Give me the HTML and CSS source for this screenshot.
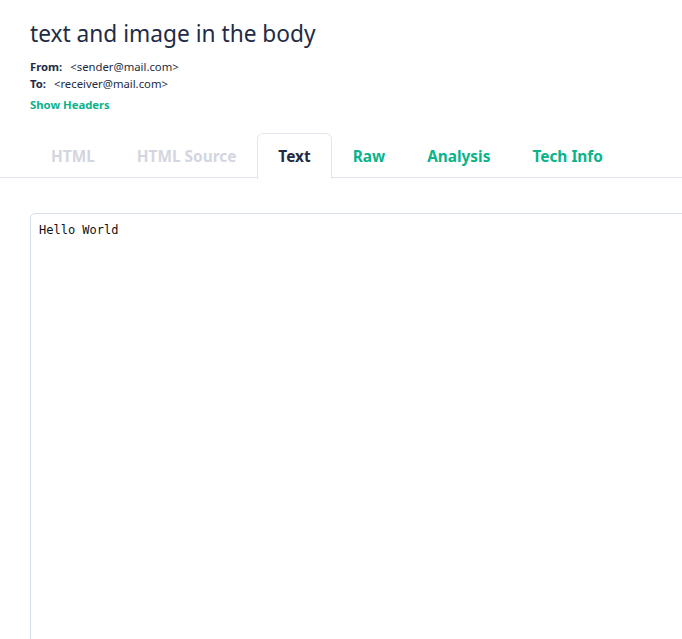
FILE: index.html
```html
<!DOCTYPE html>
<html>
<head>
<meta charset="utf-8">
<link rel="stylesheet" href="styles.css">
</head>
<body>
<div class="page">
  <header class="msg-head">
    <h1 class="subject">text and image in the body</h1>
    <div class="addr"><span class="lbl">From:</span><span class="val">&lt;sender@mail.com&gt;</span></div>
    <div class="addr"><span class="lbl">To:</span><span class="val">&lt;receiver@mail.com&gt;</span></div>
    <a class="show-headers">Show Headers</a>
  </header>
  <nav class="tabs">
    <span class="tab disabled">HTML</span>
    <span class="tab disabled">HTML Source</span>
    <span class="tab active">Text</span>
    <span class="tab link">Raw</span>
    <span class="tab link">Analysis</span>
    <span class="tab link">Tech Info</span>
  </nav>
  <section class="content">
    <pre class="textbox">Hello World</pre>
  </section>
</div>
</body>
</html>
```

FILE: styles.css
```css
html, body {
  margin: 0;
  padding: 0;
  overflow: hidden;
  background: #ffffff;
}
.page {
  font-family: "Noto Sans", "Open Sans", sans-serif;
  color: #222b45;
  width: 682px;
  height: 639px;
  overflow: hidden;
}
.msg-head {
  padding: 18px 30px 0 30px;
}
.subject {
  margin: 0 0 8px 0;
  font-size: 22.7px;
  font-weight: 400;
  line-height: 32px;
  color: #222b45;
}
.addr {
  font-size: 11.3px;
  line-height: 17px;
  color: #222b45;
}
.lbl {
  font-weight: 700;
  margin-right: 8px;
}
.show-headers {
  display: block;
  margin-top: 4px;
  font-size: 11.3px;
  font-weight: 700;
  line-height: 17px;
  color: #0bb38a;
}
.tabs {
  display: flex;
  margin-top: 20px;
  padding-left: 30px;
  border-bottom: 1px solid #e1e5ee;
  height: 44px;
}
.tab {
  padding: 1px 20px 0 20px;
  font-size: 15.4px;
  font-weight: 700;
  line-height: 43px;
  border: 1px solid transparent;
  border-bottom: none;
  border-radius: 6px 6px 0 0;
}
.tab.disabled {
  color: #d3d6e0;
}
.tab.link {
  color: #0bb38a;
}
.tab.active {
  color: #222b45;
  background: #ffffff;
  border-color: #e1e5ee;
  height: 44px;
  margin-bottom: -1px;
}
.content {
  padding: 35px 0 0 30px;
}
.textbox {
  margin: 0;
  width: 700px;
  height: 500px;
  border: 1px solid #d8e0ec;
  border-radius: 5px;
  padding: 9px 8px;
  font-family: "DejaVu Sans Mono", monospace;
  font-size: 12px;
  line-height: 14px;
  color: #111111;
}
```
